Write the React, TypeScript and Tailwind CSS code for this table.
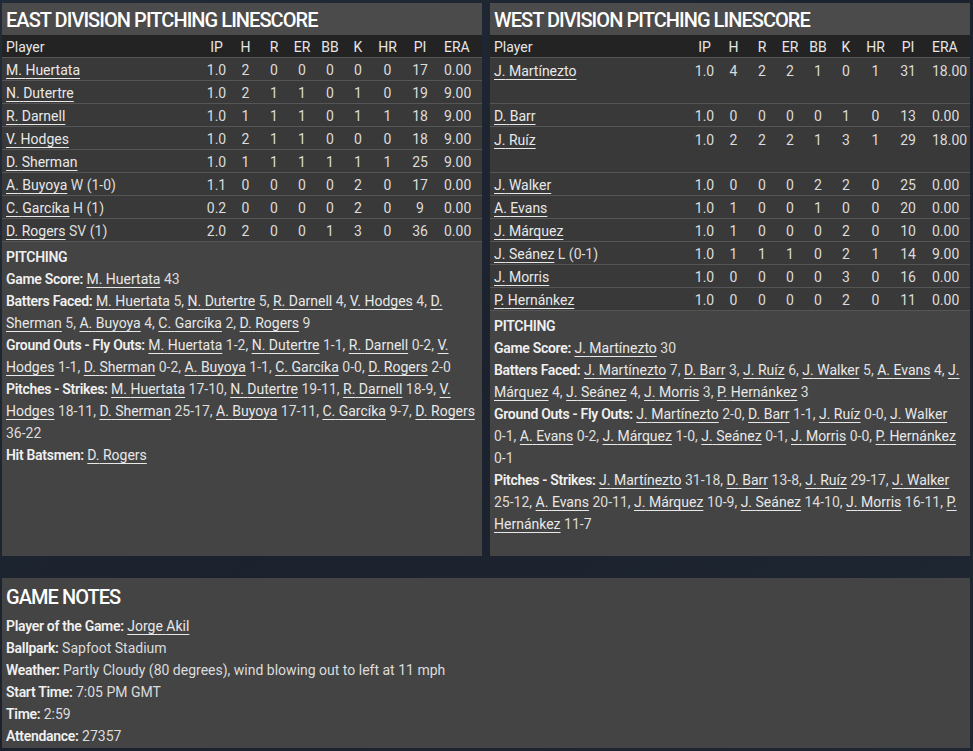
import React from "react";

type Row = { name: string; note?: string; s: string[]; tall?: boolean };

const east: Row[] = [
  { name: "M. Huertata", s: ["1.0", "2", "0", "0", "0", "0", "0", "17", "0.00"] },
  { name: "N. Dutertre", s: ["1.0", "2", "1", "1", "0", "1", "0", "19", "9.00"] },
  { name: "R. Darnell", s: ["1.0", "1", "1", "1", "0", "1", "1", "18", "9.00"] },
  { name: "V. Hodges", s: ["1.0", "2", "1", "1", "0", "0", "0", "18", "9.00"] },
  { name: "D. Sherman", s: ["1.0", "1", "1", "1", "1", "1", "1", "25", "9.00"] },
  { name: "A. Buyoya", note: "W (1-0)", s: ["1.1", "0", "0", "0", "0", "2", "0", "17", "0.00"] },
  { name: "C. Garcíka", note: "H (1)", s: ["0.2", "0", "0", "0", "0", "2", "0", "9", "0.00"] },
  { name: "D. Rogers", note: "SV (1)", s: ["2.0", "2", "0", "0", "1", "3", "0", "36", "0.00"] },
];

const west: Row[] = [
  { name: "J. Martínezto", tall: true, s: ["1.0", "4", "2", "2", "1", "0", "1", "31", "18.00"] },
  { name: "D. Barr", s: ["1.0", "0", "0", "0", "0", "1", "0", "13", "0.00"] },
  { name: "J. Ruíz", tall: true, s: ["1.0", "2", "2", "2", "1", "3", "1", "29", "18.00"] },
  { name: "J. Walker", s: ["1.0", "0", "0", "0", "2", "2", "0", "25", "0.00"] },
  { name: "A. Evans", s: ["1.0", "1", "0", "0", "1", "0", "0", "20", "0.00"] },
  { name: "J. Márquez", s: ["1.0", "1", "0", "0", "0", "2", "0", "10", "0.00"] },
  { name: "J. Seánez", note: "L (0-1)", s: ["1.0", "1", "1", "1", "0", "2", "1", "14", "9.00"] },
  { name: "J. Morris", s: ["1.0", "0", "0", "0", "0", "3", "0", "16", "0.00"] },
  { name: "P. Hernánkez", s: ["1.0", "0", "0", "0", "0", "2", "0", "11", "0.00"] },
];

type Line = { label: string; items: [string, string][] };

const eastNotes: Line[] = [
  { label: "Game Score:", items: [["M. Huertata", "43"]] },
  {
    label: "Batters Faced:",
    items: [
      ["M. Huertata", "5"], ["N. Dutertre", "5"], ["R. Darnell", "4"], ["V. Hodges", "4"],
      ["D. Sherman", "5"], ["A. Buyoya", "4"], ["C. Garcíka", "2"], ["D. Rogers", "9"],
    ],
  },
  {
    label: "Ground Outs - Fly Outs:",
    items: [
      ["M. Huertata", "1-2"], ["N. Dutertre", "1-1"], ["R. Darnell", "0-2"], ["V. Hodges", "1-1"],
      ["D. Sherman", "0-2"], ["A. Buyoya", "1-1"], ["C. Garcíka", "0-0"], ["D. Rogers", "2-0"],
    ],
  },
  {
    label: "Pitches - Strikes:",
    items: [
      ["M. Huertata", "17-10"], ["N. Dutertre", "19-11"], ["R. Darnell", "18-9"], ["V. Hodges", "18-11"],
      ["D. Sherman", "25-17"], ["A. Buyoya", "17-11"], ["C. Garcíka", "9-7"], ["D. Rogers", "36-22"],
    ],
  },
  { label: "Hit Batsmen:", items: [["D. Rogers", ""]] },
];

const westNotes: Line[] = [
  { label: "Game Score:", items: [["J. Martínezto", "30"]] },
  {
    label: "Batters Faced:",
    items: [
      ["J. Martínezto", "7"], ["D. Barr", "3"], ["J. Ruíz", "6"], ["J. Walker", "5"], ["A. Evans", "4"],
      ["J. Márquez", "4"], ["J. Seánez", "4"], ["J. Morris", "3"], ["P. Hernánkez", "3"],
    ],
  },
  {
    label: "Ground Outs - Fly Outs:",
    items: [
      ["J. Martínezto", "2-0"], ["D. Barr", "1-1"], ["J. Ruíz", "0-0"], ["J. Walker", "0-1"], ["A. Evans", "0-2"],
      ["J. Márquez", "1-0"], ["J. Seánez", "0-1"], ["J. Morris", "0-0"], ["P. Hernánkez", "0-1"],
    ],
  },
  {
    label: "Pitches - Strikes:",
    items: [
      ["J. Martínezto", "31-18"], ["D. Barr", "13-8"], ["J. Ruíz", "29-17"], ["J. Walker", "25-12"],
      ["A. Evans", "20-11"], ["J. Márquez", "10-9"], ["J. Seánez", "14-10"], ["J. Morris", "16-11"],
      ["P. Hernánkez", "11-7"],
    ],
  },
];

const heads = ["IP", "H", "R", "ER", "BB", "K", "HR", "PI", "ERA"];
const grid = "grid grid-cols-[200px_29px_29px_28px_28px_28px_28px_31px_34px_45px]";

const U = "underline decoration-1 underline-offset-[3px] text-[#e8e8e8]";
const LBL = "font-semibold text-[#f0f0f0] tracking-[-0.3px]";

function Link({ name }: { name: string }) {
  const words = name.split(" ");
  return (
    <>
      {words.map((w, i) => (
        <React.Fragment key={i}>
          <span className={U}>{w}</span>
          {i < words.length - 1 ? <span className={U}> </span> : null}
        </React.Fragment>
      ))}
    </>
  );
}

function Panel({ title, rows, notes }: { title: string; rows: Row[]; notes: Line[] }) {
  return (
    <div className="w-[480px] h-full bg-[#444444] flex flex-col">
      <div className="h-[32px] bg-[#4b4b4b] flex items-center pt-[1px] px-[4px] text-[20px] font-medium text-white tracking-[-0.95px]">
        {title}
      </div>
      <div className={`${grid} h-[23px] items-center pt-[2px] bg-[#232323] text-[#e6e6e6] border-b border-[#555]`}>
        <div className="pl-[4px]">Player</div>
        {heads.map((h, i) => (
          <div key={h} className={i === 8 ? "pl-[7px]" : "text-center"}>
            {h}
          </div>
        ))}
      </div>
      {rows.map((r) => (
        <div
          key={r.name}
          className={`${grid} ${r.tall ? "h-[46px] pt-[2px]" : "h-[23px] items-center pt-[2px]"} bg-[#393939] text-[#dcdcdc] border-b border-[#555]`}
        >
          <div className={`pl-[4px] ${r.tall ? "leading-[22px]" : ""}`}>
            <Link name={r.name} />
            {r.note ? " " + r.note : ""}
          </div>
          {r.s.map((v, i) => (
            <div key={i} className={`${r.tall ? "leading-[22px]" : ""} ${i === 8 ? "pl-[7px]" : "text-center"}`}>
              {v}
            </div>
          ))}
        </div>
      ))}
      <div className="px-[4px] pt-[4px] leading-[22px] text-[#dcdcdc]">
        <div className={LBL}>PITCHING</div>
        {notes.map((l) => (
          <div key={l.label}>
            <span className={LBL}>{l.label}</span>{" "}
            {l.items.map(([n, v], i) => (
              <React.Fragment key={n}>
                <Link name={n} />
                {v ? " " : ""}
                {v || i < l.items.length - 1 ? (
                  <span className="whitespace-nowrap">
                    {v}
                    {i < l.items.length - 1 ? "," : ""}
                  </span>
                ) : null}
                {i < l.items.length - 1 ? " " : ""}
              </React.Fragment>
            ))}
          </div>
        ))}
      </div>
    </div>
  );
}

export default function App() {
  return (
    <div
      className="w-[973px] h-[751px] overflow-hidden bg-[#1d2430] bg-gradient-to-br from-[#222b38] via-[#1b222d] to-[#1f2733] pl-[2px] pr-[3px] pt-[3px] flex flex-col text-[14px]"
      style={{ fontFamily: 'Roboto, "Open Sans", sans-serif' }}
    >
      <div className="flex gap-[8px] h-[553px]">
        <Panel title="EAST DIVISION PITCHING LINESCORE" rows={east} notes={eastNotes} />
        <Panel title="WEST DIVISION PITCHING LINESCORE" rows={west} notes={westNotes} />
      </div>
      <div className="mt-[22px] h-[170px] bg-[#444444] px-[4px] text-[#dcdcdc] leading-[22px]">
        <div className="h-[37px] flex items-center pt-[1px] text-[20px] font-medium text-white tracking-[-0.95px]">GAME NOTES</div>
        <div>
          <span className={LBL}>Player of the Game:</span> <Link name="Jorge Akil" />
        </div>
        <div>
          <span className={LBL}>Ballpark:</span> Sapfoot Stadium
        </div>
        <div>
          <span className={LBL}>Weather:</span> Partly Cloudy (80 degrees), wind blowing out to left at 11 mph
        </div>
        <div>
          <span className={LBL}>Start Time:</span> 7:05 PM GMT
        </div>
        <div>
          <span className={LBL}>Time:</span> 2:59
        </div>
        <div>
          <span className={LBL}>Attendance:</span> 27357
        </div>
      </div>
    </div>
  );
}
